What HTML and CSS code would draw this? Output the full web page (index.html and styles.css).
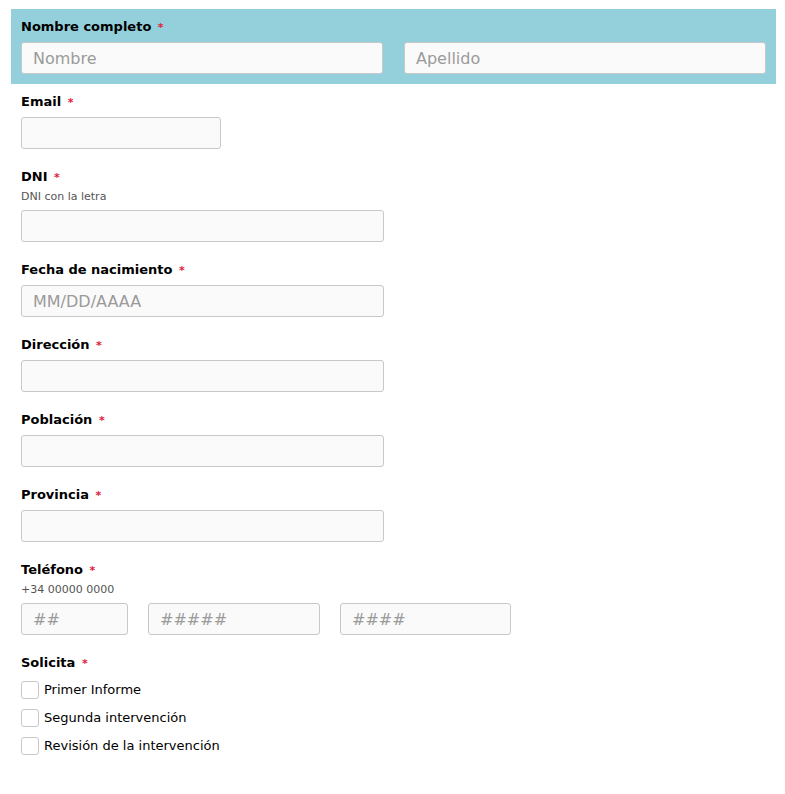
FILE: index.html
```html
<!DOCTYPE html>
<html lang="es">
<head>
    <meta charset="UTF-8">
    <meta name="viewport" content="width=device-width, initial-scale=1.0">
    <title>Formulario</title>
    <link rel="stylesheet" href="styles.css">
</head>
<body>
    <form class="form">
        <div class="field highlight">
            <label class="label">Nombre completo <span class="req">*</span></label>
            <div class="row">
                <input type="text" class="input" placeholder="Nombre">
                <input type="text" class="input" placeholder="Apellido">
            </div>
        </div>

        <div class="field">
            <label class="label" for="email">Email <span class="req">*</span></label>
            <input type="email" id="email" class="input small">
        </div>

        <div class="field">
            <label class="label" for="dni">DNI <span class="req">*</span></label>
            <div class="help">DNI con la letra</div>
            <input type="text" id="dni" class="input medium">
        </div>

        <div class="field">
            <label class="label" for="fecha">Fecha de nacimiento <span class="req">*</span></label>
            <input type="text" id="fecha" class="input medium" placeholder="MM/DD/AAAA">
        </div>

        <div class="field">
            <label class="label" for="direccion">Dirección <span class="req">*</span></label>
            <input type="text" id="direccion" class="input medium">
        </div>

        <div class="field">
            <label class="label" for="poblacion">Población <span class="req">*</span></label>
            <input type="text" id="poblacion" class="input medium">
        </div>

        <div class="field">
            <label class="label" for="provincia">Provincia <span class="req">*</span></label>
            <input type="text" id="provincia" class="input medium">
        </div>

        <div class="field">
            <label class="label">Teléfono <span class="req">*</span></label>
            <div class="help">+34 00000 0000</div>
            <div class="phone">
                <input type="text" class="input p1" placeholder="##">
                <input type="text" class="input p2" placeholder="#####">
                <input type="text" class="input p3" placeholder="####">
            </div>
        </div>

        <div class="field">
            <label class="label">Solicita <span class="req">*</span></label>
            <div class="checks">
                <label class="check"><input type="checkbox"><span>Primer Informe</span></label>
                <label class="check"><input type="checkbox"><span>Segunda intervención</span></label>
                <label class="check"><input type="checkbox"><span>Revisión de la intervención</span></label>
            </div>
        </div>
    </form>
</body>
</html>
```

FILE: styles.css
```css
body {
    margin: 0;
    font-family: "DejaVu Sans", sans-serif;
    color: #000;
    background-color: #fff;
}
.form {
    padding: 9px 9px 9px 11px;
}
.field {
    padding: 10px;
}
.highlight {
    background-color: #93d0db;
}
.label {
    display: block;
    font-size: 13px;
    font-weight: bold;
    line-height: 16px;
    margin-bottom: 6px;
}
.req {
    color: #e0203a;
    font-size: 11px;
    margin-left: 2px;
}
.help {
    font-size: 11px;
    line-height: 14px;
    color: #555;
    margin-top: -2px;
    margin-bottom: 6px;
}
.input {
    display: block;
    box-sizing: border-box;
    height: 32px;
    padding: 0 11px;
    border: 1px solid #c8c8c8;
    border-radius: 3px;
    background-color: #fafafa;
    font-family: "DejaVu Sans", sans-serif;
    font-size: 16px;
    color: #333;
}
.input::placeholder {
    color: #9a9a9a;
}
.row {
    display: flex;
    gap: 21px;
}
.row .input {
    flex: 1;
}
.small {
    width: 200px;
}
.medium {
    width: 363px;
}
.phone {
    display: flex;
    gap: 20px;
}
.p1 { width: 107px; }
.p2 { width: 172px; }
.p3 { width: 171px; }
.checks {
    display: flex;
    flex-direction: column;
    gap: 10px;
    padding-top: 3px;
}
.check {
    display: flex;
    align-items: center;
    gap: 5px;
    font-size: 13px;
    line-height: 18px;
}
.check input {
    appearance: none;
    margin: 0;
    width: 18px;
    height: 18px;
    border: 1px solid #c8c8c8;
    border-radius: 3px;
    background-color: #fff;
}
```
